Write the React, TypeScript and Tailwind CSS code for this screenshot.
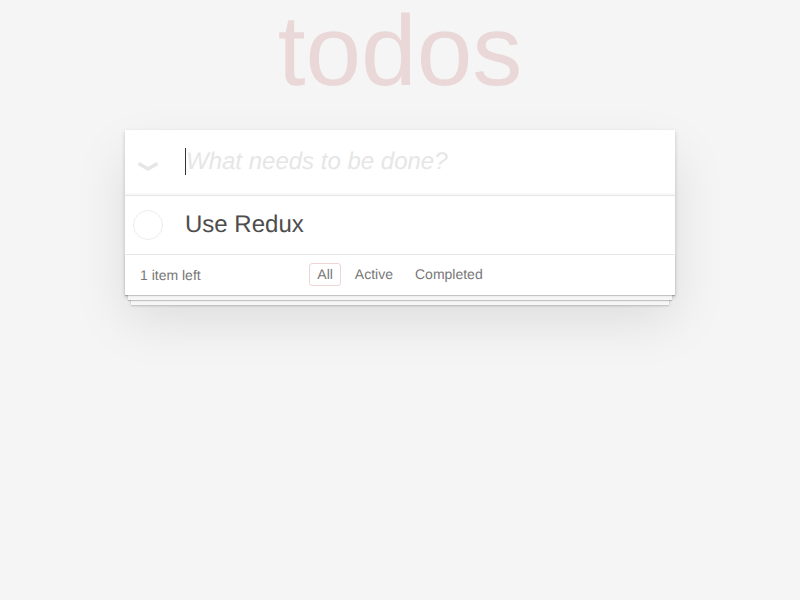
type Filter = "All" | "Active" | "Completed";

const filters: Filter[] = ["All", "Active", "Completed"];

function ToggleAllIcon() {
  return (
    <svg width="22" height="9" viewBox="0 0 22 9" className="block">
      <polyline
        points="1.5,1.5 11,7 20.5,1.5"
        fill="none"
        stroke="#e6e6e6"
        strokeWidth="3.5"
        strokeLinejoin="miter"
      />
    </svg>
  );
}

function TodoCircle() {
  return (
    <svg width="30" height="30" viewBox="0 0 30 30" className="block">
      <circle cx="15" cy="15" r="14.5" fill="none" stroke="#ededed" strokeWidth="1" />
    </svg>
  );
}

export default function App() {
  const selected: Filter = "All";

  return (
    <div className="min-h-screen bg-[#f5f5f5] font-['Liberation_Sans','Helvetica_Neue',Helvetica,Arial,sans-serif] text-[#4d4d4d] text-[14px] [text-rendering:geometricPrecision]">
      <div className="mx-auto w-[550px]">
        <h1 className="h-[130px] pt-[1px] text-center text-[100px] leading-[100px] font-normal text-[rgba(175,47,47,0.15)]">
          todos
        </h1>

        <section className="bg-white shadow-[0_2px_4px_0_rgba(0,0,0,0.2),0_25px_50px_0_rgba(0,0,0,0.1)]">
          <header className="flex h-[65px] items-start shadow-[inset_0_-2px_1px_rgba(0,0,0,0.03)]">
            <div className="w-[60px] pl-[12px] pt-[32px]">
              <ToggleAllIcon />
            </div>
            <div className="flex h-[65px] items-center pb-[2px]">
              <span className="h-[27px] w-px bg-[#333]" />
              <span className="text-[24px] italic leading-[33.6px] text-[#e6e6e6]">
                What needs to be done?
              </span>
            </div>
          </header>

          <ul className="border-t border-[#e6e6e6]">
            <li className="flex h-[58px] items-center">
              <div className="w-[45px] pl-[8px]">
                <TodoCircle />
              </div>
              <label className="pl-[15px] text-[24px] leading-[28.8px] text-[#4d4d4d]">
                Use Redux
              </label>
            </li>
          </ul>

          <footer className="grid h-[41px] grid-cols-[1fr_auto_1fr] items-center border-t border-[#e6e6e6] px-[15px] leading-[20px] text-[#777] shadow-[0_1px_1px_rgba(0,0,0,0.2),0_8px_0_-3px_#f6f6f6,0_9px_1px_-3px_rgba(0,0,0,0.2),0_16px_0_-6px_#f6f6f6,0_17px_2px_-6px_rgba(0,0,0,0.2)]">
            <span className="text-left">1 item left</span>
            <ul className="mb-[2px] flex">
              {filters.map((f) => (
                <li key={f}>
                  <a
                    href="#"
                    className={
                      f === selected
                        ? "mx-[3px] inline-block rounded-[3px] border border-[rgba(175,47,47,0.2)] px-[7px] py-[3px] leading-[15px] text-[#777]"
                        : "mx-[3px] inline-block rounded-[3px] border border-transparent px-[7px] py-[3px] leading-[15px] text-[#777]"
                    }
                  >
                    {f}
                  </a>
                </li>
              ))}
            </ul>
            <span />
          </footer>
        </section>
      </div>
    </div>
  );
}
